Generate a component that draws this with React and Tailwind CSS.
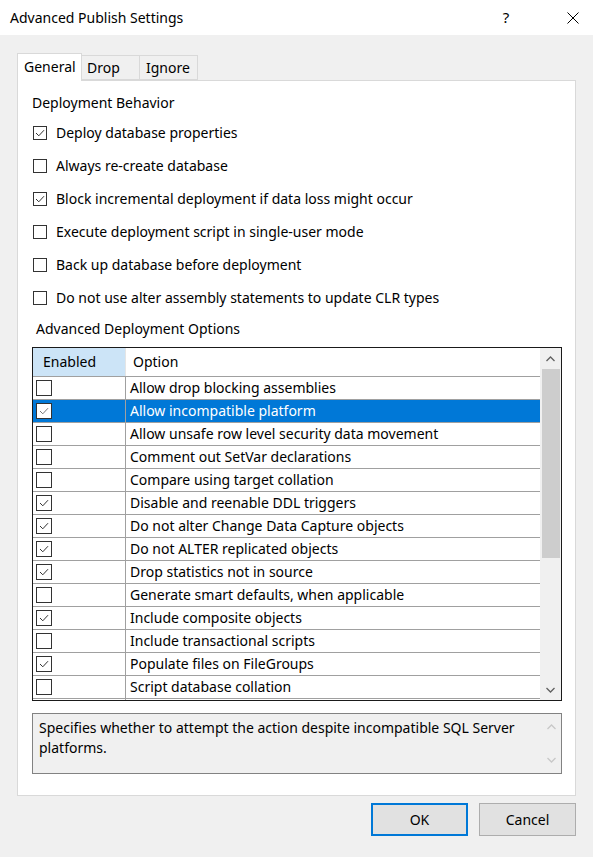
import React from "react";

const behavior = [
  { label: "Deploy database properties", on: true },
  { label: "Always re-create database", on: false },
  { label: "Block incremental deployment if data loss might occur", on: true },
  { label: "Execute deployment script in single-user mode", on: false },
  { label: "Back up database before deployment", on: false },
  { label: "Do not use alter assembly statements to update CLR types", on: false },
];

const options = [
  { label: "Allow drop blocking assemblies", on: false },
  { label: "Allow incompatible platform", on: true, sel: true },
  { label: "Allow unsafe row level security data movement", on: false },
  { label: "Comment out SetVar declarations", on: false },
  { label: "Compare using target collation", on: false },
  { label: "Disable and reenable DDL triggers", on: true },
  { label: "Do not alter Change Data Capture objects", on: true },
  { label: "Do not ALTER replicated objects", on: true },
  { label: "Drop statistics not in source", on: true },
  { label: "Generate smart defaults, when applicable", on: false },
  { label: "Include composite objects", on: true },
  { label: "Include transactional scripts", on: false },
  { label: "Populate files on FileGroups", on: true },
  { label: "Script database collation", on: false },
  { label: "", on: false },
];

function Check({ on, size = 13, color = "#333" }) {
  return (
    <div
      className="flex items-center justify-center border border-[#333] bg-white shrink-0"
      style={{ width: size, height: size }}
    >
      {on && (
        <svg width="10" height="8" viewBox="0 0 10 8">
          <polyline points="1,4 3.8,6.8 9,1.2" fill="none" stroke={color} strokeWidth="1" />
        </svg>
      )}
    </div>
  );
}

function Chevron({ up, color = "#606060" }) {
  return (
    <svg width="9" height="6" viewBox="0 0 9 6">
      <polyline
        points={up ? "0.5,5 4.5,1 8.5,5" : "0.5,1 4.5,5 8.5,1"}
        fill="none"
        stroke={color}
        strokeWidth="1.3"
      />
    </svg>
  );
}

export default function App() {
  return (
    <div
      className="w-[593px] h-[857px] bg-[#f0f0f0] flex flex-col text-[14px] text-black overflow-hidden"
      style={{ fontFamily: '"Segoe UI", "Noto Sans", sans-serif' }}
    >
      {/* title bar */}
      <div className="h-[35px] bg-white flex items-center pl-[10px]">
        <div className="flex-1 text-[14px]">Advanced Publish Settings</div>
        <div className="w-[20px] text-center text-[15px] mr-[34px]">?</div>
        <div className="w-[46px] flex justify-center mr-[-3px]">
          <svg width="12" height="12" viewBox="0 0 12 12">
            <path d="M0.5 0.5 L11.5 11.5 M11.5 0.5 L0.5 11.5" stroke="#000" strokeWidth="1" />
          </svg>
        </div>
      </div>

      <div className="px-[17px] pt-[18px] flex flex-col">
        {/* tabs */}
        <div className="flex items-end h-[27px] relative z-10">
          <div className="h-[28px] -mb-px w-[65px] bg-white border border-b-0 border-[#d9d9d9] pl-[6px] pt-[3px] leading-[20px]">
            General
          </div>
          <div className="h-[25px] w-[58px] border border-l-0 border-[#d9d9d9] bg-[#f0f0f0] pl-[5px] leading-[24px]">
            Drop
          </div>
          <div className="h-[25px] w-[58px] border border-l-0 border-[#d9d9d9] bg-[#f0f0f0] pl-[6px] leading-[24px]">
            Ignore
          </div>
        </div>

        {/* panel */}
        <div className="h-[716px] bg-white border border-[#d9d9d9] flex flex-col pl-[14px] pr-[13px]">
          <div className="mt-[12px] h-[20px] leading-[20px]">Deployment Behavior</div>
          <div className="mt-[3px] flex flex-col pl-px">
            {behavior.map((b) => (
              <div key={b.label} className="h-[33px] flex items-center gap-[9px]">
                <Check on={b.on} size={14} />
                <span className="leading-[20px]">{b.label}</span>
              </div>
            ))}
          </div>
          <div className="mt-[5px] h-[20px] leading-[20px] pl-[4px]">Advanced Deployment Options</div>

          {/* grid */}
          <div className="mt-[8px] h-[354px] border border-[#1a1a1a] flex overflow-hidden">
            <div className="flex-1 flex flex-col overflow-hidden">
              <div className="h-[29px] shrink-0 flex border-b border-[#a0a0a0]">
                <div className="w-[93px] bg-[#cce4f7] border-r border-[#e5e5e5] pl-[10px] leading-[28px]">
                  Enabled
                </div>
                <div className="flex-1 pl-[7px] leading-[28px]">Option</div>
              </div>
              {options.map((o, i) => (
                <div
                  key={i}
                  className={
                    "h-[23px] shrink-0 flex border-b border-[#a0a0a0] " +
                    (o.sel ? "bg-[#0078d7] text-white" : "bg-white")
                  }
                >
                  <div className="w-[93px] border-r border-[#a0a0a0] pl-[3px] pt-[3px]">
                    <Check on={o.on} size={16} color={o.sel ? "#777" : "#333"} />
                  </div>
                  <div className="flex-1 pl-[4px] leading-[22px] whitespace-nowrap">{o.label}</div>
                </div>
              ))}
            </div>
            {/* scrollbar */}
            <div className="w-[21px] bg-[#f0f0f0] flex flex-col items-center">
              <div className="h-[21px] flex items-center justify-center">
                <Chevron up />
              </div>
              <div className="w-[18px] h-[189px] bg-[#cdcdcd]" />
              <div className="flex-1" />
              <div className="h-[21px] flex items-center justify-center">
                <Chevron />
              </div>
            </div>
          </div>

          {/* description */}
          <div className="mt-[12px] h-[61px] border border-[#828282] bg-[#f0f0f0] flex">
            <div className="flex-1 pl-[6px] pt-[4px] leading-[20px]">
              Specifies whether to attempt the action despite incompatible SQL Server platforms.
            </div>
            <div className="w-[20px] flex flex-col items-center justify-between py-[10px]">
              <Chevron up color="#c8c8c8" />
              <Chevron color="#c8c8c8" />
            </div>
          </div>
        </div>

        {/* buttons */}
        <div className="mt-[7px] flex justify-end gap-[11px]">
          <div className="w-[97px] h-[33px] bg-[#e1e1e1] border-2 border-[#0078d7] flex items-center justify-center">
            OK
          </div>
          <div className="w-[97px] h-[33px] bg-[#e1e1e1] border border-[#adadad] flex items-center justify-center">
            Cancel
          </div>
        </div>
      </div>
    </div>
  );
}
